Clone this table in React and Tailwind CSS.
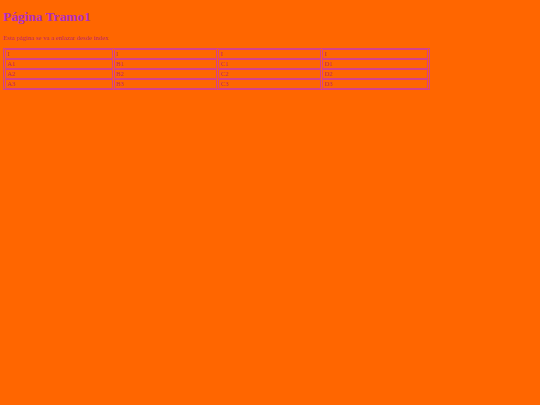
import React from 'react';

const rows = [
	['I', 'I', 'I', 'I'],
	['A1', 'B1', 'C1', 'D1'],
	['A2', 'B2', 'C2', 'D2'],
	['A3', 'B3', 'C3', 'D3'],
];

const widths = ['w-[108px]', 'w-[104px]', 'w-[103px]', 'w-[106px]'];

const App = () => {
	return (
		<main className="min-h-[405px] w-full bg-[#ff6600] px-[3px] pt-[9px] font-['Liberation_Serif',serif]">
			<h1 className="text-[13.4px] font-bold leading-[16px] text-[#b22cc2]">
				Página Tramo1
			</h1>
			<p className="mt-[9px] text-[6.7px] leading-[8px] text-[#c0246c]">
				Esta página se va a enlazar desde index
			</p>
			<table className="mt-[6px] w-[427px] border-separate border-spacing-x-[1px] border-spacing-y-0 border border-[#d4428a] text-[6.7px] text-[#c0246c]">
				<tbody>
					{rows.map((row, i) => (
						<tr key={i}>
							{row.map((cell, j) => (
								<td
									key={j}
									className={`${widths[j]} border border-[#d4428a] px-[1px] py-0 leading-[8px]`}
								>
									{cell}
								</td>
							))}
						</tr>
					))}
				</tbody>
			</table>
		</main>
	);
};

export default App;
